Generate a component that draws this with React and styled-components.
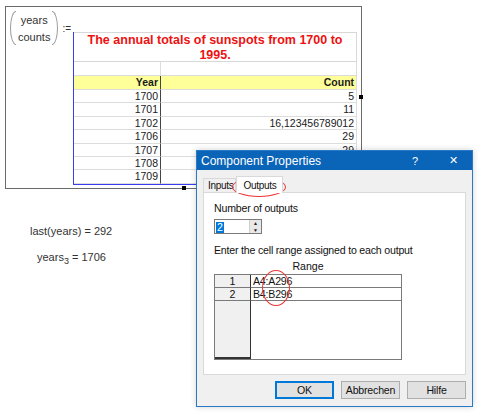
import React from 'react';
import styled, { createGlobalStyle } from 'styled-components';

const GlobalStyle = createGlobalStyle`
  html, body {
    margin: 0;
    padding: 0;
    background: #ffffff;
  }
  body {
    font-family: "Liberation Sans", Arial, sans-serif;
    color: #1a1a1a;
  }
`;

const Page = styled.div`
  position: relative;
  width: 480px;
  height: 414px;
  overflow: hidden;
  background: #fff;
  padding: 6px 0 0 5px;
  box-sizing: border-box;
`;

const Region = styled.div`
  position: relative;
  width: 357px;
  height: 183px;
  border: 1px solid #6a6a6a;
  box-sizing: border-box;
  display: flex;
  align-items: flex-start;
  padding: 3px 0 0 4px;
`;

const Handle = styled.div`
  position: absolute;
  width: 4px;
  height: 4px;
  background: #000;
`;

const Matrix = styled.div`
  display: flex;
  align-items: stretch;
  height: 34px;
  margin-top: 1px;
`;

const Paren = styled.div`
  width: 5px;
  border: 1px solid #9a9a9a;
  border-${p => (p.$side === 'left' ? 'right' : 'left')}: none;
  border-radius: ${p => (p.$side === 'left' ? '6px 0 0 6px / 17px 0 0 17px' : '0 6px 6px 0 / 0 17px 17px 0')};
`;

const MatrixCells = styled.div`
  display: flex;
  flex-direction: column;
  justify-content: space-around;
  align-items: center;
  padding: 0 2px;
  font-size: 11px;
  color: #333;
  line-height: 14px;
`;

const Assign = styled.div`
  font-size: 10px;
  margin: 13px 0 0 4px;
  color: #333;
`;

const Sheet = styled.div`
  margin: 22px 0 0 2px;
  width: 284px;
  border-left: 1.5px solid #3b3bf0;
  border-bottom: 1.5px solid #3b3bf0;
  box-sizing: border-box;
  display: grid;
  grid-template-columns: 87px 1fr;
  grid-template-rows: 30px 14px 14px repeat(7, 13.4px);
  font-size: 10.5px;
`;

const Title = styled.div`
  grid-column: 1 / 3;
  border: 1px solid #d8d8d8;
  border-left: none;
  color: #ee1111;
  font-weight: bold;
  font-size: 12.5px;
  text-align: center;
  line-height: 15px;
  box-sizing: border-box;
`;

const Cell = styled.div`
  box-sizing: border-box;
  border-bottom: 1px solid #dcdcdc;
  border-right: 1px solid ${p => (p.$divider ? '#444' : '#dcdcdc')};
  background: ${p => (p.$head ? '#ffff99' : '#fff')};
  font-weight: ${p => (p.$head ? 'bold' : 'normal')};
  text-align: right;
  padding-right: 2px;
  line-height: 13px;
  white-space: nowrap;
  overflow: hidden;
`;

const Results = styled.div`
  display: flex;
  flex-direction: column;
  gap: 12px;
  margin: 35px 0 0 25px;
  font-size: 11px;
  color: #333;
`;

const Result = styled.div`
  margin-left: ${p => p.$indent || 0}px;
  line-height: 14px;
`;

const Sub = styled.sub`
  font-size: 9px;
`;

const Dialog = styled.div`
  position: absolute;
  left: 196px;
  top: 150px;
  width: 277px;
  height: 257px;
  background: #f0f0f0;
  border: 1px solid #2a78c8;
  box-sizing: border-box;
  display: flex;
  flex-direction: column;
  font-size: 10.6px;
  color: #111;
  box-shadow: 0 0 6px rgba(0, 0, 0, 0.18);
`;

const TitleBar = styled.div`
  height: 21px;
  background: #0a64b8;
  color: #fff;
  display: flex;
  align-items: center;
  padding: 0 0 0 4px;
  font-size: 12px;
`;

const TitleText = styled.div`
  flex: 1;
`;

const TitleButton = styled.div`
  width: ${p => p.$w}px;
  text-align: center;
  font-size: 11px;
`;

const Body = styled.div`
  flex: 1;
  display: flex;
  flex-direction: column;
  padding: 5px 6px 7px 6px;
`;

const Tabs = styled.div`
  display: flex;
  align-items: flex-end;
  height: 17px;
  padding-left: 0;
`;

const Tab = styled.div`
  position: relative;
  height: ${p => (p.$active ? 17 : 14)}px;
  padding: ${p => (p.$active ? '0 6px' : '0 2px 0 4px')};
  background: ${p => (p.$active ? '#fff' : '#f0f0f0')};
  border: 1px solid #d9d9d9;
  border-bottom: none;
  margin-bottom: ${p => (p.$active ? -1 : 0)}px;
  z-index: ${p => (p.$active ? 1 : 0)};
  display: flex;
  align-items: center;
  box-sizing: border-box;
  font-size: 10px;
  letter-spacing: -0.3px;
`;

const Panel = styled.div`
  width: 263px;
  height: 183px;
  background: #fff;
  border: 1px solid #d9d9d9;
  box-sizing: border-box;
  padding: 9px 0 0 10px;
  display: flex;
  flex-direction: column;
`;

const Label = styled.div`
  line-height: 13px;
  letter-spacing: -0.2px;
  margin-top: ${p => p.$gap || 0}px;
`;

const Spinner = styled.div`
  display: flex;
  width: 48px;
  height: 15px;
  margin: 4px 0 0 0;
  border: 1px solid #7a7a7a;
  box-sizing: border-box;
`;

const SpinInput = styled.div`
  flex: 1;
  padding: 1px 0 0 1px;
`;

const Selected = styled.span`
  background: #0078d7;
  color: #fff;
  padding: 0 1px;
  line-height: 11px;
  display: inline-block;
`;

const SpinButtons = styled.div`
  width: 11px;
  display: flex;
  flex-direction: column;
  border-left: 1px solid #cfcfcf;
  background: #e8e8e8;
`;

const SpinArrow = styled.div`
  flex: 1;
  display: flex;
  align-items: center;
  justify-content: center;
  font-size: 5px;
  color: #222;
`;

const RangeHead = styled.div`
  width: 188px;
  text-align: center;
  margin-top: 3px;
  line-height: 13px;
`;

const Grid = styled.div`
  position: relative;
  width: 188px;
  height: 86px;
  margin-top: 1px;
  border: 1px solid #7a7a7a;
  box-sizing: border-box;
  display: grid;
  grid-template-columns: 36px 1fr;
  grid-template-rows: 13px 13px 1fr;
`;

const RowHead = styled.div`
  background: #f0f0f0;
  border-right: 1px solid #333;
  border-bottom: 1px solid ${p => (p.$last ? '#333' : '#7a7a7a')};
  text-align: center;
  line-height: 12px;
  ${p => p.$last && 'border-bottom-width: 2px;'}
`;

const RangeCell = styled.div`
  border-bottom: 1px solid ${p => (p.$empty ? 'transparent' : '#7a7a7a')};
  padding-left: 2px;
  line-height: 12px;
  letter-spacing: -0.2px;
`;

const Buttons = styled.div`
  display: flex;
  justify-content: flex-end;
  gap: 7px;
  margin-top: 6px;
`;

const Button = styled.div`
  width: 59px;
  height: 18px;
  box-sizing: border-box;
  border: 1px solid ${p => (p.$primary ? '#0078d7' : '#adadad')};
  ${p => p.$primary && 'box-shadow: inset 0 0 0 1px #0078d7;'}
  background: #e1e1e1;
  display: flex;
  align-items: center;
  justify-content: center;
  letter-spacing: -0.2px;
`;

const Ring = styled.div`
  position: absolute;
  border: 1px solid #e33;
  border-radius: 50%;
  pointer-events: none;
`;

const rows = [
  ['1700', '5'],
  ['1701', '11'],
  ['1702', '16,123456789012'],
  ['1706', '29'],
  ['1707', '29'],
  ['1708', '31'],
  ['1709', '25'],
];

export default function App() {
  return (
    <>
      <GlobalStyle />
      <Page>
        <Region>
          <Matrix>
            <Paren $side="left" />
            <MatrixCells>
              <span>years</span>
              <span>counts</span>
            </MatrixCells>
            <Paren $side="right" />
          </Matrix>
          <Assign>:=</Assign>
          <Sheet>
            <Title>
              The annual totals of sunspots from 1700 to
              <br />
              1995.
            </Title>
            <Cell />
            <Cell />
            <Cell $head $divider>Year</Cell>
            <Cell $head>Count</Cell>
            {rows.map(([y, c]) => (
              <React.Fragment key={y}>
                <Cell $divider>{y}</Cell>
                <Cell>{c}</Cell>
              </React.Fragment>
            ))}
          </Sheet>
          <Handle style={{ left: 353, top: 88 }} />
          <Handle style={{ left: 176, top: 179 }} />
        </Region>

        <Results>
          <Result>last(years) = 292</Result>
          <Result $indent={7}>
            years<Sub>3</Sub> = 1706
          </Result>
        </Results>

        <Dialog>
          <TitleBar>
            <TitleText>Component Properties</TitleText>
            <TitleButton $w={38}>?</TitleButton>
            <TitleButton $w={38}>✕</TitleButton>
          </TitleBar>
          <Body>
            <Tabs>
              <Tab>Inputs</Tab>
              <Tab $active>Outputs</Tab>
            </Tabs>
            <Panel>
              <Label>Number of outputs</Label>
              <Spinner>
                <SpinInput>
                  <Selected>2</Selected>
                </SpinInput>
                <SpinButtons>
                  <SpinArrow>▲</SpinArrow>
                  <SpinArrow>▼</SpinArrow>
                </SpinButtons>
              </Spinner>
              <Label $gap={10}>Enter the cell range assigned to each output</Label>
              <RangeHead>Range</RangeHead>
              <Grid>
                <RowHead>1</RowHead>
                <RangeCell>A4:A296</RangeCell>
                <RowHead>2</RowHead>
                <RangeCell>B4:B296</RangeCell>
                <RowHead $last />
                <RangeCell $empty />
              </Grid>
            </Panel>
            <Buttons>
              <Button $primary>OK</Button>
              <Button>Abbrechen</Button>
              <Button>Hilfe</Button>
            </Buttons>
          </Body>
        </Dialog>
        <Ring style={{ left: 232, top: 177, width: 52, height: 18 }} />
        <Ring style={{ left: 262, top: 270, width: 26, height: 34 }} />
      </Page>
    </>
  );
}
